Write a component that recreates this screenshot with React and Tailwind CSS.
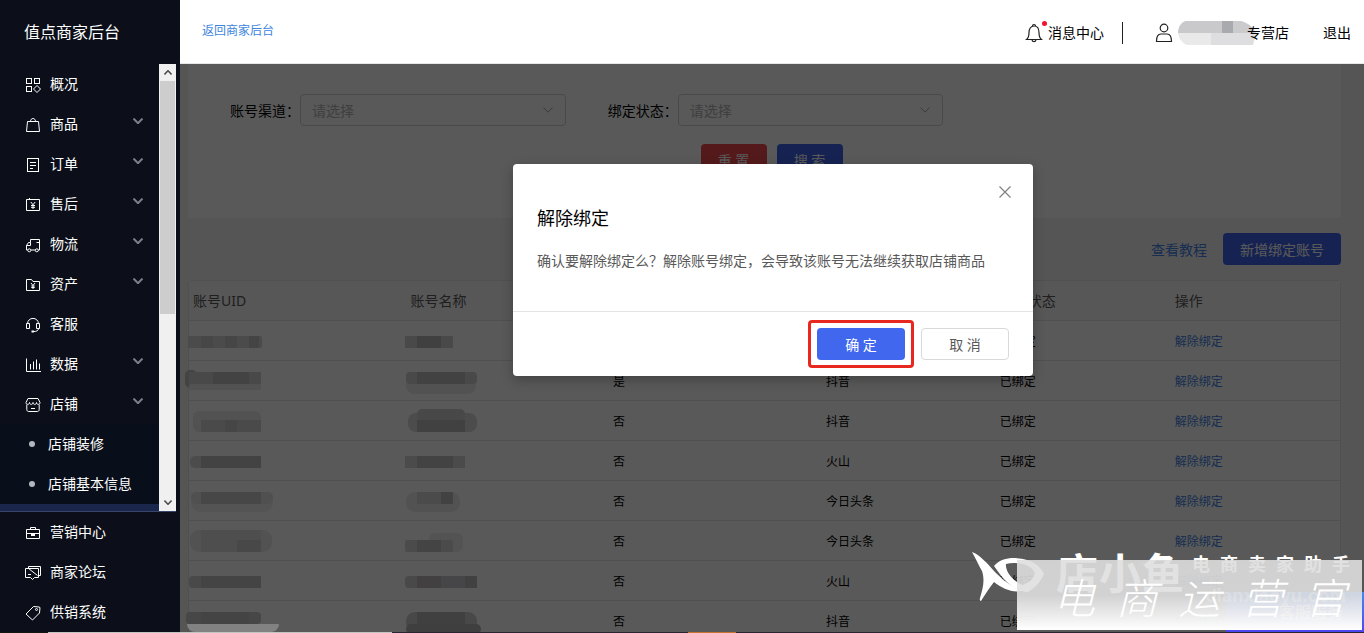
import React, { useState } from 'react';

// 侧边栏图标
const icons = {
  overview: (
    <>
      <rect x="1.5" y="1.5" width="5" height="5" />
      <rect x="9.5" y="1.5" width="5" height="5" />
      <rect x="1.5" y="9.5" width="5" height="5" />
      <path d="M12 8.5l3.5 3.5-3.5 3.5L8.500 12z" />
    </>
  ),
  goods: (
    <>
      <path d="M2.500 4.500h11l1 10h-13z" />
      <path d="M5.500 4.500c0-4 5-4 5 0" />
    </>
  ),
  order: (
    <>
      <rect x="2.500" y="1.500" width="11" height="13" />
      <path d="M5 5.500h6M5 8.500h6M5 11.500h3" />
    </>
  ),
  aftersale: (
    <>
      <path d="M1.500 2.500h13v11h-13z" />
      <path d="M4.500 1v2M5.800 5l2.200 2.700L10.200 5M8 7.500V12M6 8.500h4M6 10.300h4" />
    </>
  ),
  logistics: (
    <>
      <path d="M6 13h4.500M13.200 13h1.300V2.500h-9V5.500h-2l-2 3V13h1.300" />
      <path d="M1.500 8.500h4v-3M11.500 5.500h3" />
      <circle cx="4.300" cy="13.300" r="1.500" />
      <circle cx="11.800" cy="13.300" r="1.500" />
    </>
  ),
  assets: (
    <>
      <path d="M1.500 13.500v-11h5l1.500 2h6.500v9z" />
      <path d="M6 6l2 2.500L10 6M8 8.500V12M6.300 9h3.400M6.300 10.500h3.400" />
    </>
  ),
  service: (
    <>
      <path d="M2.500 7C2.500-.5 13.500-.5 13.500 7" />
      <path d="M4.500 6.500h-3v5h3zM11.500 6.500h3v5h-3zM13.500 11.500c0 2-2 3-4.500 3" />
      <path d="M6.500 14.500H9" strokeWidth="2" />
    </>
  ),
  data: <path d="M1.500 1.500v13H16M5.500 7v5.500M8.500 4.500v8M11.500 2.500v10M14.500 6.500v6" />,
  shop: (
    <>
      <path d="M3 1.500h10l2 4c0 2.500-3.500 2.500-3.500 0 0 2.500-3.500 2.500-3.500 0 0 2.500-3.500 2.500-3.500 0 0 2.500-3.500 2.500-3.500 0z" />
      <path d="M1.800 7.500v5c0 1.500 1 2 2 2h8.400c1 0 2-.500 2-2v-5M6 11.500h4" />
    </>
  ),
  marketing: (
    <>
      <path d="M1.500 4.500h13v9h-13zM5.500 4.500v-2h5v2M1.500 8.500h4.500M10 8.500h4.500" />
      <path d="M6 9.500h4" strokeWidth="3" />
    </>
  ),
  forum: (
    <>
      <path d="M3.500 3.500v-2h12v9h-2" />
      <path d="M.5 3.500h13v9h-4l-2 2-2-2h-5zM3 9.500h3M3.500 3.500l9 7" />
    </>
  ),
  supply: (
    <>
      <path d="M1 9l7.500-7.500 5.500.500 1 .5-.5 5.500L7.500 15z" />
      <circle cx="11.500" cy="4.500" r="1" />
    </>
  ),
};

const SideIcon = ({ name }) => (
  <svg viewBox="0 0 16 16" className="mt-px w-4 h-4 shrink-0" fill="none" stroke="currentColor" strokeWidth="1" aria-hidden="true">
    {icons[name]}
  </svg>
);

const Chevron = ({ className, strokeWidth = 1 }) => (
  <svg viewBox="0 0 10 6" className={className} fill="none" stroke="currentColor" strokeWidth={strokeWidth} aria-hidden="true">
    <path d="M.5.5L5 5.200 9.500.5" />
  </svg>
);

const menu = [
  { icon: 'overview', label: '概况' },
  { icon: 'goods', label: '商品', more: true },
  { icon: 'order', label: '订单', more: true },
  { icon: 'aftersale', label: '售后', more: true },
  { icon: 'logistics', label: '物流', more: true },
  { icon: 'assets', label: '资产', more: true },
  { icon: 'service', label: '客服' },
  { icon: 'data', label: '数据', more: true },
  { icon: 'shop', label: '店铺', more: true },
];

const bottomMenu = [
  { icon: 'marketing', label: '营销中心' },
  { icon: 'forum', label: '商家论坛' },
  { icon: 'supply', label: '供销系统' },
];

const MenuItem = ({ icon, label, more }) => (
  <li>
    <a href="#" className="flex h-10 items-center gap-[9px] pl-[25px] pr-4 text-sm text-white">
      <SideIcon name={icon} />
      <span className="flex-1">{label}</span>
      {more && <Chevron className="mb-[6px] h-[6px] w-[10px] text-[#7c7f88]" strokeWidth={2} />}
    </a>
  </li>
);

const Sidebar = () => (
  <aside className="flex w-[180px] shrink-0 flex-col bg-[#0c0f19] pb-px">
    <h1 className="flex h-16 shrink-0 items-center pl-6 text-base text-white">值点商家后台</h1>
    <div className="mr-1 flex min-h-0 flex-1 border-b border-[#3a4669]">
      <nav className="flex-1 overflow-hidden">
        <ul>
          {menu.map((item) => (
            <MenuItem key={item.icon} {...item} />
          ))}
        </ul>
        <ul className="bg-[#080e1a]">
          {['店铺装修', '店铺基本信息'].map((label) => (
            <li key={label}>
              <a href="#" className="flex h-10 items-center gap-[13px] pl-[29px] text-sm text-white">
                <span className="h-[6px] w-[6px] rounded-full bg-[#b4b7bf]" />
                {label}
              </a>
            </li>
          ))}
          <li className="h-10 bg-[#1b264d]" />
        </ul>
      </nav>
      {/* 滚动条 */}
      <div className="flex w-[17px] flex-col items-center bg-[#f0f0f0]">
        <Chevron className="my-[6px] h-[5px] w-2 rotate-180 text-[#505050]" strokeWidth={2} />
        <div className="h-[233px] w-[15px] bg-[#cdcdcd]" />
        <div className="flex-1" />
        <Chevron className="my-[6px] h-[5px] w-2 text-[#505050]" strokeWidth={2} />
      </div>
    </div>
    <ul className="shrink-0">
      {bottomMenu.map((item) => (
        <MenuItem key={item.icon} {...item} />
      ))}
    </ul>
  </aside>
);

const Header = () => (
  <header className="flex h-16 shrink-0 items-center border-b border-[#e8e8e8] bg-white pl-[22px] pr-[13px] text-sm text-black">
    <a href="#" className="pb-[2px] text-xs text-[#3d85dd]">返回商家后台</a>
    <div className="ml-auto flex items-center pt-[3px]">
      <a href="#" className="flex items-center gap-[5px]">
        <span className="relative">
          <svg viewBox="0 0 18 20" className="h-5 w-[18px]" fill="none" stroke="#222" strokeWidth="1.200" aria-hidden="true">
            <path d="M1.500 16.500c2-1.500 2.500-3 2.500-7C4 5.500 6 3 9 3s5 2.500 5 6.500c0 4 .500 5.500 2.500 7z" />
            <path d="M7.500 3c0-2 3-2 3 0M7 17c.500 2.200 3.500 2.200 4 0" />
          </svg>
          <span className="absolute -right-1 -top-[2px] h-[5px] w-[5px] rounded-full bg-[#f5112d]" />
        </span>
        消息中心
      </a>
      <span className="ml-[18px] mr-8 h-[22px] w-px bg-[#222]" />
      <a href="#" className="flex items-center">
        <svg viewBox="0 0 18 20" className="h-5 w-[18px]" fill="none" stroke="#222" strokeWidth="1.200" aria-hidden="true">
          <circle cx="9" cy="5" r="3.800" />
          <path d="M1.500 18.500c0-5 1.500-7.500 4.500-7.500h6c3 0 4.500 2.500 4.500 7.500z" />
        </svg>
        <svg viewBox="0 0 78 24" className="ml-[5px] h-6 w-[78px]" aria-hidden="true">
          <path d="M8 0h36v12H0C0 6 3 1 8 0z" fill="#c9c9cb" />
          <path d="M44 0h11v12H44z" fill="#a9aaae" />
          <path d="M55 0h8c7 2 12 6 15 12H55z" fill="#cbcbcd" />
          <path d="M0 12h33v12H9c-5-2-8-6-9-12z" fill="#e9e9ea" />
          <path d="M33 12h45l-3 12H33z" fill="#dedee1" />
        </svg>
        <span className="-ml-[9px]">专营店</span>
      </a>
      <a href="#" className="ml-[34px]">退出</a>
    </div>
  </header>
);

const SelectField = ({ id, label, options }) => (
  <div className="flex items-center pl-8 pr-[10px]">
    <label htmlFor={id} className="shrink-0 pt-px text-sm text-black">{label}：</label>
    <div className="relative flex-1">
      <select
        id={id}
        defaultValue=""
        className="h-8 w-full appearance-none rounded border border-[#d0d0d0] bg-white pl-[11px] pr-8 pt-px text-sm text-[#b4b4b4]"
      >
        <option value="">请选择</option>
        {options.map((o) => (
          <option key={o}>{o}</option>
        ))}
      </select>
      <Chevron className="pointer-events-none absolute right-[13px] top-[13px] h-[6px] w-[10px] text-[#a8a8a8]" />
    </div>
  </div>
);

const Filters = () => (
  <section className="bg-white px-[10px] pb-[42px] pt-[30px]">
    <div className="grid grid-cols-3">
      <SelectField id="channel" label="账号渠道" options={['抖音', '火山', '今日头条']} />
      <SelectField id="status" label="绑定状态" options={['已绑定', '未绑定']} />
    </div>
    <div className="mt-[18px] flex justify-center gap-[10px] pl-[14px]">
      <button className="h-8 w-[66px] rounded bg-[#f04a4e] pt-px text-sm text-white">重 置</button>
      <button className="h-8 w-[66px] rounded bg-[#4166ea] pt-px text-sm text-white">搜 索</button>
    </div>
  </section>
);

// 打码色块：[x, y, 宽, 高, 灰度, 圆角]
const rows = [
  {
    master: '是', channel: '抖音',
    uid: [[3, 15, 74, 12, '#d8d8d8', 2], [16, 15, 12, 12, '#cacaca'], [40, 15, 12, 12, '#c8c8c8'], [64, 15, 10, 12, '#c4c4c6']],
    name: [[2, 15, 48, 12, '#d2d2d2'], [14, 15, 24, 12, '#b8b8b8']],
  },
  {
    master: '是', channel: '抖音',
    uid: [[0, 9, 12, 18, '#c4c4c4', 5], [4, 11, 72, 12, '#d0d0d0'], [28, 11, 36, 12, '#c0c0c0'], [4, 23, 72, 6, '#ebebeb', 2]],
    name: [[3, 11, 70, 22, '#ebebeb', 8], [3, 11, 71, 12, '#d2d2d2', 4], [14, 11, 48, 12, '#bcbcbc']],
  },
  {
    master: '否', channel: '抖音',
    uid: [[8, 10, 68, 21, '#eaeaea', 6], [16, 19, 60, 12, '#d4d4d4'], [40, 19, 12, 12, '#c8c8c8']],
    name: [[5, 12, 69, 19, '#d9d9d9', 8], [14, 8, 48, 12, '#cecece', 5], [14, 19, 48, 12, '#bababa']],
  },
  {
    master: '否', channel: '火山',
    uid: [[5, 15, 24, 12, '#dadada', 5], [16, 15, 60, 12, '#c0c0c0']],
    name: [[2, 15, 60, 12, '#d8d8d8'], [14, 15, 36, 12, '#bfbfbf']],
  },
  {
    master: '否', channel: '今日头条',
    uid: [[6, 11, 82, 20, '#f0f0f0', 9], [6, 11, 82, 12, '#e4e4e4', 5], [16, 11, 60, 12, '#cacaca']],
    name: [[3, 11, 54, 20, '#eaeaea', 9], [14, 11, 24, 12, '#d8d8d8'], [38, 11, 12, 12, '#bcbcbc']],
  },
  {
    master: '否', channel: '今日头条',
    uid: [[5, 9, 82, 22, '#ececec', 9], [16, 9, 60, 22, '#e0e0e0'], [52, 19, 24, 12, '#cecece']],
    name: [[26, 12, 34, 19, '#eeeeee', 6], [2, 19, 48, 12, '#d6d6d6', 2], [14, 19, 24, 12, '#c4c4c4']],
  },
  {
    master: '否', channel: '火山',
    uid: [[4, 15, 24, 12, '#d2d2d2', 4], [16, 15, 60, 12, '#c2c2c4']],
    name: [[2, 15, 24, 12, '#d2d2d2', 4], [14, 15, 24, 12, '#bcb8b8'], [38, 15, 24, 12, '#c8c8ce'], [62, 15, 12, 12, '#bababa']],
  },
  {
    master: '否', channel: '抖音',
    uid: [[1, 11, 75, 12, '#cacaca', 4], [16, 11, 48, 12, '#c2c2c2']],
    name: [[3, 11, 71, 20, '#cecece', 9], [14, 11, 48, 12, '#b8b8b8'], [3, 23, 75, 10, '#b4b4b4', 5]],
  },
];

const Mosaic = ({ blocks }) => (
  <svg viewBox="0 0 96 40" className="-my-[2px] -ml-2 h-10 w-24 max-w-none" aria-hidden="true">
    {blocks.map(([x, y, w, h, fill, rx], i) => (
      <rect key={i} x={x} y={y} width={w} height={h} fill={fill} rx={rx || 0} />
    ))}
  </svg>
);

const AccountTable = () => (
  <div className="mt-[15px] rounded-t border border-[#e6e6e6] bg-white">
    <table className="w-full table-fixed text-left text-xs text-black">
      <colgroup>
        <col className="w-[18.9%]" />
        <col className="w-[17.6%]" />
        <col className="w-[18.5%]" />
        <col className="w-[15.1%]" />
        <col className="w-[15.2%]" />
        <col />
      </colgroup>
      <thead>
        <tr className="h-[39px] border-b border-[#e6e6e6] bg-[#fafafa] text-sm text-[#5a5a5a]">
          <th className="px-1 pt-px font-normal">账号UID</th>
          <th className="px-1 pt-px font-normal">账号名称</th>
          <th className="px-1 pt-px font-normal">是否主账号</th>
          <th className="px-1 pt-px font-normal">账号渠道</th>
          <th className="px-1 pt-px font-normal">绑定状态</th>
          <th className="px-1 pt-px font-normal">操作</th>
        </tr>
      </thead>
      <tbody>
        {rows.map((row, i) => (
          <tr key={i} className="h-10 border-b border-[#e6e6e6]">
            <td className="px-1 pt-[2px]"><Mosaic blocks={row.uid} /></td>
            <td className="px-1 pt-[2px]"><Mosaic blocks={row.name} /></td>
            <td className="px-1 pt-1">{row.master}</td>
            <td className="px-1 pt-1">{row.channel}</td>
            <td className="px-1 pt-1">已绑定</td>
            <td className="px-1 pt-1"><a href="#" className="text-[#4284e6]">解除绑定</a></td>
          </tr>
        ))}
      </tbody>
    </table>
  </div>
);

const ConfirmModal = ({ onClose }) => (
  <div className="absolute inset-0 flex items-start justify-center bg-black/65 pl-[2px] pt-[100px]">
    <div role="dialog" aria-labelledby="modal-title" className="w-[520px] rounded bg-white shadow-[0_4px_12px_rgba(0,0,0,0.25)]">
      <div className="flex justify-end px-[22px] pt-[22px]">
        <button onClick={onClose} aria-label="关闭" className="h-3 w-3">
          <svg viewBox="0 0 12 12" className="h-3 w-3" fill="none" stroke="#808080" strokeWidth="1.200" aria-hidden="true">
            <path d="M.5.5l11 11M11.500.5l-11 11" />
          </svg>
        </button>
      </div>
      <div className="px-6 pb-[39px] pt-[6px]">
        <h2 id="modal-title" className="text-lg leading-7 text-black">解除绑定</h2>
        <p className="mt-[18px] text-sm leading-[22px] text-[#595959]">
          确认要解除绑定么？解除账号绑定，会导致该账号无法继续获取店铺商品
        </p>
      </div>
      <div className="flex justify-end gap-4 border-t border-[#e4e4e4] px-6 py-4">
        <div className="relative">
          <button onClick={onClose} className="h-8 w-[88px] rounded bg-[#4067ee] pt-px text-sm text-white">确 定</button>
          <span className="pointer-events-none absolute -inset-x-[9px] -inset-y-2 rounded-sm border-[3px] border-[#e8281e]" />
        </div>
        <button onClick={onClose} className="h-8 w-[88px] rounded border border-[#d9d9d9] bg-white pt-px text-sm text-[#595959]">取 消</button>
      </div>
    </div>
  </div>
);

// 右下角水印
const Watermark = () => (
  <div className="pointer-events-none absolute bottom-[3px] right-[2px] h-[84px] w-[390px] text-white">
    <div className="absolute -bottom-[2px] -right-[2px] flex h-[40px] w-[138px] items-center justify-center bg-linear-to-t from-[#4d45f0] to-[#4287f5] pl-8 text-base">
      客服服务
    </div>
    <svg viewBox="0 0 76 56" className="absolute left-0 top-[6px] h-14 w-[76px]" fill="#fff" aria-hidden="true">
      <path d="M0 0c8 3 15 11 22 19 9 9 19 18 31 19-11 4-22-1-31-8-5 6-9 13-13 19-2-1-1-2-1-3 3-10 5-18 2-27C7 14 4 7 0 0z" />
      <path fillRule="evenodd" d="M22 14c7-8 18-9 29-7s18 8 21 15c-3 7-9 14-16 18-7 0-13-3-19-8-6-5-10-11-15-18zm12-2c-1 8 8 18 17 21 7-3 11-7 12-12-3-8-18-12-29-9z" />
    </svg>
    <div className="absolute left-[84px] top-0 flex w-[128px] justify-between text-[42px] font-bold leading-[54px]">
      <span>店</span><span>小</span><span>鱼</span>
    </div>
    <div className="absolute left-[220px] top-0 flex w-[158px] justify-between text-lg font-bold leading-9">
      {[...'电商卖家助手'].map((c) => (
        <span key={c}>{c}</span>
      ))}
    </div>
    <p className="absolute right-[16px] top-[40px] font-['Inter',sans-serif] text-lg font-bold leading-5 text-white/60">dianxiaoyu.com</p>
    <div className="absolute bottom-0 right-0 flex h-[70px] w-[345px] items-end justify-between bg-linear-to-b from-[#dedede]/90 via-[#dfdfdf]/90 to-white pb-[2px] pl-9 pr-4 text-[42px] font-light italic leading-[60px]">
      {[...'电商运营官'].map((c) => (
        <span key={c}>{c}</span>
      ))}
    </div>
  </div>
);

const App = () => {
  const [showModal, setShowModal] = useState(true);

  return (
    <div className="relative flex h-screen overflow-hidden font-['Noto_Sans','Noto_Sans_CJK_SC',sans-serif]">
      <Sidebar />
      <div className="flex min-w-0 flex-1 flex-col">
        <Header />
        <main className="relative min-h-0 flex-1 overflow-hidden bg-[#f3f3f6]">
          <div className="pl-2 pr-[23px]">
            <Filters />
            <div className="mt-[15px] flex items-center justify-end gap-4 text-sm">
              <a href="#" className="pt-px text-[#4284e6]">查看教程</a>
              <button onClick={() => setShowModal(true)} className="h-8 rounded bg-[#4166ea] px-[17px] pt-px text-white">新增绑定账号</button>
            </div>
            <AccountTable />
          </div>
          {showModal && <ConfirmModal onClose={() => setShowModal(false)} />}
          <span className="absolute bottom-px left-[7px] h-2 w-[92px] rounded-b-lg bg-[#828282]" />
        </main>
      </div>
      <Watermark />
      <div className="absolute inset-x-0 bottom-0 flex h-px bg-[#2a2433]">
        <span className="w-12 bg-[#141414]" />
        <span className="w-[344px] bg-[#c4c4c4]" />
        <span className="ml-[296px] w-12 bg-[#c8742f]" />
      </div>
    </div>
  );
};

export default App;
